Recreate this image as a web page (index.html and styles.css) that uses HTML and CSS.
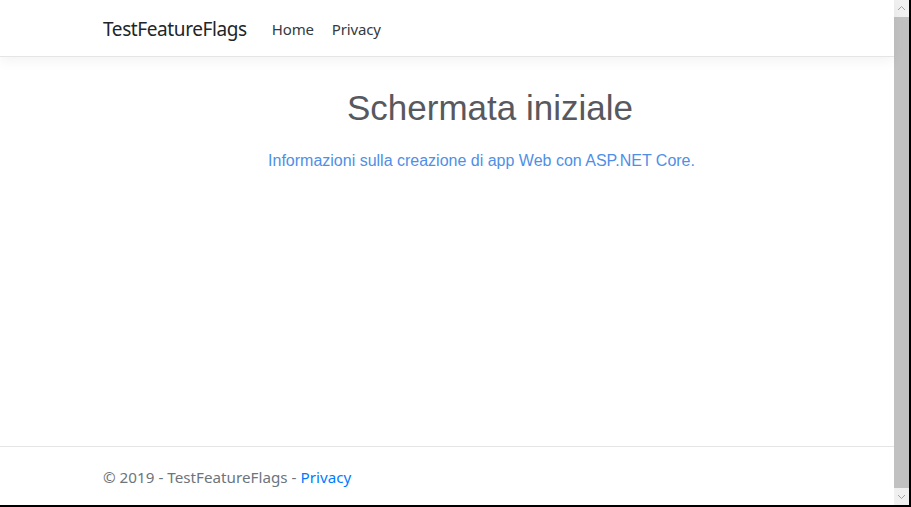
FILE: index.html
```html
<!DOCTYPE html>
<html lang="it">
<head>
<meta charset="utf-8">
<title>TestFeatureFlags</title>
<link rel="stylesheet" href="styles.css">
</head>
<body>
<div class="frame">
  <div class="page">
    <header class="navbar">
      <div class="container nav-inner">
        <a class="brand" href="#">TestFeatureFlags</a>
        <nav class="nav">
          <a class="nav-link" href="#">Home</a>
          <a class="nav-link" href="#">Privacy</a>
        </nav>
      </div>
    </header>
    <main class="main">
      <div class="container hero">
        <h1 class="title">Schermata iniziale</h1>
        <p class="lead"><a href="#">Informazioni sulla creazione di app Web con ASP.NET Core.</a></p>
      </div>
    </main>
    <footer class="footer">
      <div class="container">&copy; 2019 - TestFeatureFlags - <a href="#">Privacy</a></div>
    </footer>
  </div>
  <div class="scrollbar">
    <div class="sb-btn">
      <svg width="15" height="17" viewBox="0 0 15 17"><path d="M4 10 L7.5 6.5 L11 10" fill="none" stroke="#a3a3a3" stroke-width="1"/></svg>
    </div>
    <div class="sb-thumb"></div>
    <div class="sb-btn">
      <svg width="15" height="17" viewBox="0 0 15 17"><path d="M4 7 L7.5 10.5 L11 7" fill="none" stroke="#a3a3a3" stroke-width="1"/></svg>
    </div>
  </div>
</div>
</body>
</html>
```
FILE: styles.css
```css
html, body {
  margin: 0;
  padding: 0;
  height: 100%;
  overflow: hidden;
  background: #fff;
}
a { text-decoration: none; }
.frame {
  box-sizing: border-box;
  width: 911px;
  height: 507px;
  display: flex;
  border-right: 2px solid #000;
  border-bottom: 2px solid #000;
}
.page {
  flex: 1;
  display: flex;
  flex-direction: column;
  min-width: 0;
  font-family: "Noto Sans", "Open Sans", sans-serif;
}
.container {
  width: 720px;
  margin: 0 auto;
  padding: 0 15px 0 16px;
  box-sizing: border-box;
}
.navbar {
  height: 56px;
  border-bottom: 1px solid #e5e5e5;
  box-shadow: 0 4px 12px rgba(0,0,0,0.05);
  display: flex;
  align-items: center;
  position: relative;
  z-index: 1;
}
.nav-inner {
  display: flex;
  align-items: center;
}
.brand {
  color: #212529;
  font-size: 19px;
  letter-spacing: -0.4px;
  margin-right: 25px;
  line-height: 1;
  padding-top: 2px;
}
.nav {
  display: flex;
  gap: 18px;
}
.nav-link {
  color: #343a40;
  font-size: 15px;
  letter-spacing: -0.15px;
  padding-top: 2px;
}
.main {
  flex: 1;
}
.hero {
  text-align: center;
  font-family: "Liberation Sans", Arial, sans-serif;
  padding-top: 31px;
}
.title {
  margin: 0;
  font-size: 35px;
  font-weight: normal;
  color: #58585f;
  line-height: 40px;
  padding-left: 85px;
}
.lead {
  margin: 23px 0 0;
  font-size: 16px;
  line-height: 20px;
  padding-left: 68px;
}
.lead a {
  color: #4f8fe6;
}
.footer {
  border-top: 1px solid #e5e5e5;
  height: 56px;
  padding-top: 2px;
  color: #6c757d;
  font-size: 15.2px;
}
.footer .container {
  line-height: 56px;
  letter-spacing: 0.02px;
}
.footer a {
  color: #007bff;
}
.scrollbar {
  width: 15px;
  display: flex;
  flex-direction: column;
  background: #f0f0f0;
}
.sb-btn {
  height: 17px;
  display: flex;
  align-items: center;
  justify-content: center;
}
.sb-btn svg { display: block; }
.sb-thumb {
  flex: 1;
  background: #c1c1c1;
}
```
